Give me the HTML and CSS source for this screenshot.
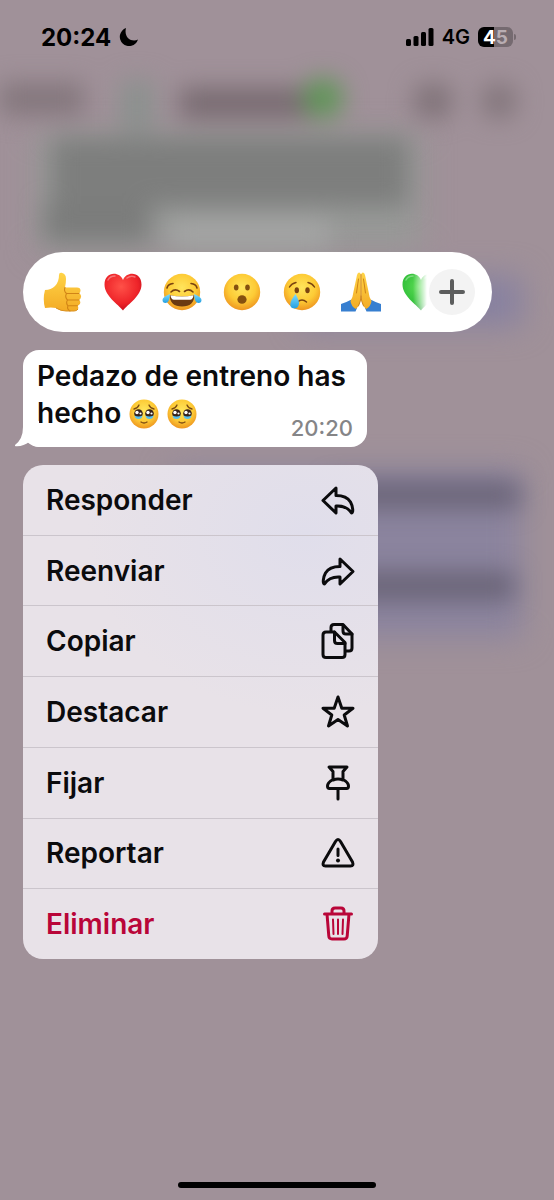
FILE: index.html
```
<!DOCTYPE html>
<html lang="es">
<head>
    <meta charset="UTF-8">
    <meta name="viewport" content="width=device-width, initial-scale=1.0">
    <title>Chat</title>
    <link rel="stylesheet" href="styles.css">
</head>
<body>
    <!-- Blurred chat behind the menu -->
    <svg class="backdrop" viewBox="0 0 554 1200" preserveAspectRatio="xMidYMin slice" aria-hidden="true">
        <defs>
            <filter id="soft" x="-80%" y="-150%" width="260%" height="400%" color-interpolation-filters="sRGB"><feGaussianBlur stdDeviation="12"/></filter>
            <filter id="softer" x="-30%" y="-60%" width="160%" height="220%" color-interpolation-filters="sRGB"><feGaussianBlur stdDeviation="15"/></filter>
        </defs>
        <g filter="url(#softer)">
            <rect x="36" y="134" width="386" height="116" fill="#979997"/>
            <rect x="300" y="276" width="222" height="50" fill="#8781a0"/>
            <rect x="170" y="470" width="352" height="168" fill="#8b849e"/>
        </g>
        <g filter="url(#soft)">
            <rect x="0" y="83" width="84" height="32" fill="#83767c"/>
            <rect x="120" y="80" width="34" height="52" fill="#8b918e"/>
            <rect x="180" y="88" width="130" height="30" fill="#776a70"/>
            <circle cx="323" cy="98" r="20" fill="#5e9656"/>
            <rect x="414" y="84" width="38" height="34" rx="12" fill="#7f7278"/>
            <rect x="482" y="84" width="34" height="34" rx="12" fill="#82757b"/>
            <rect x="52" y="138" width="356" height="68" fill="#7d7e7d"/>
            <rect x="44" y="204" width="106" height="38" fill="#7b7c7b"/>
            <rect x="170" y="218" width="160" height="30" fill="#a4a5a4"/>
            <rect x="330" y="482" width="190" height="26" fill="#696376"/>
            <rect x="330" y="572" width="184" height="28" fill="#696376"/>
        </g>
    </svg>

    <!-- Shared emoji drawings -->
    <svg class="defs" aria-hidden="true">
        <defs>
            <radialGradient id="face" cx="50%" cy="38%" r="62%">
                <stop offset="0" stop-color="#ffe55c"/>
                <stop offset="0.6" stop-color="#fdcb36"/>
                <stop offset="1" stop-color="#ee9620"/>
            </radialGradient>
            <radialGradient id="red" cx="45%" cy="35%" r="65%">
                <stop offset="0" stop-color="#ff5148"/>
                <stop offset="0.7" stop-color="#ee2429"/>
                <stop offset="1" stop-color="#c80f1d"/>
            </radialGradient>
            <radialGradient id="green" cx="45%" cy="35%" r="65%">
                <stop offset="0" stop-color="#5ddd56"/>
                <stop offset="0.7" stop-color="#34c13b"/>
                <stop offset="1" stop-color="#169a28"/>
            </radialGradient>
            <linearGradient id="skin" x1="0" y1="0" x2="0" y2="1">
                <stop offset="0" stop-color="#ffd447"/>
                <stop offset="1" stop-color="#f3ab25"/>
            </linearGradient>
            <linearGradient id="tear" x1="0" y1="0" x2="0" y2="1">
                <stop offset="0" stop-color="#7fdcff"/>
                <stop offset="1" stop-color="#249fe0"/>
            </linearGradient>
            <symbol id="pleading" viewBox="0 0 30 30">
                <circle cx="15" cy="15" r="14.5" fill="url(#face)"/>
                <path d="M5 10q4-1 5-4M25 10q-4-1-5-4" fill="none" stroke="#7b4a12" stroke-width="1.3" stroke-linecap="round"/>
                <circle cx="9.5" cy="14.5" r="4.3" fill="#35211a"/>
                <circle cx="20.5" cy="14.5" r="4.3" fill="#35211a"/>
                <path d="M5.500 16.500q4 2 8 0q-.5 3.500-4 3.500t-4-3.500zM16.500 16.500q4 2 8 0q-.5 3.500-4 3.500t-4-3.500z" fill="#57bff0"/>
                <circle cx="8" cy="13.500" r="1.700" fill="#fff"/>
                <circle cx="11.500" cy="14.500" r="1.100" fill="#fff"/>
                <circle cx="19" cy="13.500" r="1.700" fill="#fff"/>
                <circle cx="22.500" cy="14.500" r="1.100" fill="#fff"/>
                <path d="M12 23q3 2 6 0" fill="none" stroke="#7b4a12" stroke-width="1.300" stroke-linecap="round"/>
            </symbol>
            <symbol id="heart" viewBox="0 0 40 40">
                <path d="M20 38.500C15 32 1.500 24 1.500 12.500C1.500 5.500 6 1.800 10.800 1.800C15 1.800 18.300 4 20 8C21.700 4 25 1.800 29.200 1.800C34 1.800 38.500 5.500 38.500 12.500C38.500 24 25 32 20 38.500Z"/>
                <path d="M5 8q2-4 7-4M24 6q4-3 8-1" fill="none" stroke="#fff" stroke-opacity="0.35" stroke-width="1.500" stroke-linecap="round"/>
            </symbol>
        </defs>
    </svg>

    <header class="status-bar">
        <div class="status-left">
            <span class="clock">20:24</span>
            <svg class="moon" viewBox="0 0 20 20" aria-hidden="true"><path d="M7 1A9.300 9.300 0 1 0 19 12.500C13 15.500 4.500 11 7 1Z"/></svg>
        </div>
        <div class="status-right">
            <svg class="signal" viewBox="0 0 28 18" aria-hidden="true">
                <rect x="0" y="11" width="5" height="7" rx="1.500"/>
                <rect x="7.500" y="8" width="5" height="10" rx="1.500"/>
                <rect x="15" y="4" width="5" height="14" rx="1.500"/>
                <rect x="22.500" y="0" width="5" height="18" rx="1.500"/>
            </svg>
            <span class="network">4G</span>
            <div class="battery">
                <span class="battery-percent"><span>4</span><span class="battery-dim">5</span></span>
            </div>
        </div>
    </header>

    <main class="overlay">
        <div class="reactions">
            <div class="reaction-list">
                <button class="reaction" aria-label="Me gusta">
                    <svg viewBox="0 0 40 40">
                        <path d="M2 18Q8 18 12 14Q16 10 16 3Q16 .5 18.500 .8Q23 1.500 23 7Q23 11 22 15.500H34Q37.500 15.500 37.500 18.500Q37.500 20.500 36 21.500Q38.500 22.500 38 25Q37.800 27 36 28Q38 29.500 37 31.800Q36.200 33.400 34.500 33.800Q35.800 35.200 35 37Q34 39 31 39H23Q17 39 13 36Q8 35 2 36Q-.5 27 2 18Z" fill="url(#skin)"/>
                        <path d="M22 15.500Q20.500 19 23.500 21.500H36M23.500 21.500Q21.500 25 24.500 28H36M24.500 28Q22.500 31 25 33.800H34.500M25 33.800Q23.500 37 27 39" fill="none" stroke="#d18416" stroke-width="1.100" stroke-linecap="round"/>
                        <path d="M13 36Q18 39 23 39H31Q34 39 35 37" fill="none" stroke="#d99020" stroke-width="1"/>
                    </svg>
                </button>
                <button class="reaction" aria-label="Me encanta">
                    <svg viewBox="0 0 40 40" fill="url(#red)"><use href="#heart"/></svg>
                </button>
                <button class="reaction" aria-label="Me divierte">
                    <svg viewBox="0 0 40 40">
                        <circle cx="20" cy="20" r="18.200" fill="url(#face)"/>
                        <path d="M5 16q1-4 6-4.500M35 16q-1-4-6-4.500M9 20q4-4 8.500-.5M31 20q-4-4-8.500-.5" fill="none" stroke="#7a4310" stroke-width="1.600" stroke-linecap="round"/>
                        <path d="M7.500 23Q20 26 32.500 23Q32 34.500 20 34.500T7.500 23Z" fill="#6b3a12"/>
                        <path d="M8.500 23.200Q20 26 31.500 23.200Q31 27.500 28 27.800H12Q9 27.500 8.500 23.200Z" fill="#fff"/>
                        <path d="M8 22Q7.500 31 3.500 31Q.5 31 .5 28Q.5 25 8 22ZM32 22Q32.500 31 36.500 31Q39.500 31 39.500 28Q39.500 25 32 22Z" fill="url(#tear)"/>
                    </svg>
                </button>
                <button class="reaction" aria-label="Me asombra">
                    <svg viewBox="0 0 40 40">
                        <circle cx="20" cy="20" r="18.200" fill="url(#face)"/>
                        <ellipse cx="14.200" cy="15.500" rx="2.300" ry="3" fill="#85500f"/>
                        <ellipse cx="25.500" cy="15.500" rx="2.300" ry="3" fill="#85500f"/>
                        <ellipse cx="20" cy="27.500" rx="4.600" ry="4.300" fill="#85500f"/>
                    </svg>
                </button>
                <button class="reaction" aria-label="Me entristece">
                    <svg viewBox="0 0 40 40">
                        <circle cx="20" cy="20" r="18.200" fill="url(#face)"/>
                        <path d="M7.500 15q2-3.500 6.500-4.500M32.500 15q-2-3.500-6.500-4.500M15.500 30q4.500-4 9 0" fill="none" stroke="#7a4310" stroke-width="1.500" stroke-linecap="round"/>
                        <ellipse cx="14.800" cy="18.300" rx="2.200" ry="3" fill="#7a4310"/>
                        <ellipse cx="25.500" cy="18.300" rx="2.200" ry="3" fill="#7a4310"/>
                        <path d="M13.500 22Q17.500 29 17 32Q16 36.500 12 36.500Q8 36 8.300 32Q8.800 28 13.500 22Z" fill="url(#tear)"/>
                    </svg>
                </button>
                <button class="reaction" aria-label="Gracias">
                    <svg viewBox="0 0 40 40">
                        <path d="M0 32Q6 30 10.500 27.500L16 36L14.500 39.500H0ZM40 32Q34 30 29.500 27.500L24 36L25.500 39.500H40Z" fill="#377fd0"/>
                        <path d="M19.800 2.500Q19.500 .5 18 .5Q16.600 .5 16 3L12.500 19.500Q12 25 9.500 29Q10 34 14.800 37Q19.800 33 19.800 24ZM20.200 2.500Q20.500 .5 22 .5Q23.400 .5 24 3L27.500 19.500Q28 25 30.500 29Q30 34 25.200 37Q20.200 33 20.200 24Z" fill="url(#skin)"/>
                        <path d="M20 2.500V24Q20 29 17.500 34M20 24Q20 29 22.500 34M17.500 7L15.500 21M22.500 7L24.500 21" fill="none" stroke="#c87c13" stroke-width=".9" stroke-linecap="round"/>
                    </svg>
                </button>
                <button class="reaction" aria-label="Corazón verde">
                    <svg viewBox="0 0 40 40" fill="url(#green)"><use href="#heart"/></svg>
                </button>
            </div>
            <button class="reaction-more" aria-label="Más reacciones">
                <svg viewBox="0 0 26 26"><path d="M13 2V24M2 13H24"/></svg>
            </button>
        </div>

        <article class="message">
            <div class="message-text">Pedazo de entreno has</div>
            <div class="message-last-line">
                <div class="message-text message-emojis">
                    <span>hecho</span>
                    <svg class="emoji" role="img" aria-label="🥹"><use href="#pleading"/></svg>
                    <svg class="emoji" role="img" aria-label="🥹"><use href="#pleading"/></svg>
                </div>
                <time class="message-time">20:20</time>
            </div>
            <svg class="message-tail" viewBox="0 0 24 26" aria-hidden="true"><path d="M8 0V6Q8 18 0 24Q-.5 25.500 2 25.300Q9 25 14 21Q17 25 24 26V0Z"/></svg>
        </article>

        <nav class="menu">
            <button class="menu-item">
                <span>Responder</span>
                <svg class="menu-icon" viewBox="0 0 36 36"><path d="M16 6L3 18.500L16 31V24C23.500 23.500 28 25.500 31.500 31C33.500 31 33 24.500 30.500 20C27.500 15 22.500 13.500 16 13.500Z"/></svg>
            </button>
            <button class="menu-item">
                <span>Reenviar</span>
                <svg class="menu-icon" viewBox="0 0 36 36"><path d="M20 6L33 18.500L20 31V24C12.500 23.500 8 25.500 4.500 31C2.500 31 3 24.500 5.500 20C8.500 15 13.500 13.500 20 13.500Z"/></svg>
            </button>
            <button class="menu-item">
                <span>Copiar</span>
                <svg class="menu-icon" viewBox="0 0 36 36">
                    <path d="M11 8V4.500Q11 1.500 14 1.500H23L32 11V25Q32 28 29 28H25.500"/>
                    <path d="M23 2V8Q23 11 26 11H32"/>
                    <path d="M6 9H14.500L25 19.500V31.500Q25 34.500 22 34.500H6Q3 34.500 3 31.500V12Q3 9 6 9Z"/>
                    <path d="M14.500 9V17.500Q14.500 20.500 17.500 20.500H25"/>
                </svg>
            </button>
            <button class="menu-item">
                <span>Destacar</span>
                <svg class="menu-icon" viewBox="0 0 36 36"><path d="M18 3L21.800 14.200H33L24.200 21L27.500 32L18 25.500L8.500 32L11.800 21L3 14.200H14.200Z"/></svg>
            </button>
            <button class="menu-item">
                <span>Fijar</span>
                <svg class="menu-icon" viewBox="0 0 36 36">
                    <path d="M9 2H27L23 6.500V14.500Q28.500 17.500 28.500 21Q28.500 23.500 26.500 23.500H9.500Q7.500 23.500 7.500 21Q7.500 17.500 13 14.500V6.500ZM13 15Q18 13 23 15M18 23.500V34"/>
                </svg>
            </button>
            <button class="menu-item">
                <span>Reportar</span>
                <svg class="menu-icon" viewBox="0 0 36 36">
                    <path d="M15.500 6.500Q18 2.500 20.500 6.500L32.500 27Q34 31 30.500 31H5.500Q2 31 3.500 27ZM18 14V20.500"/>
                    <circle class="dot" cx="18" cy="25.500" r="2"/>
                </svg>
            </button>
            <button class="menu-item menu-item-danger">
                <span>Eliminar</span>
                <svg class="menu-icon" viewBox="0 0 36 36">
                    <path d="M4.500 8H31.500M12 8V5Q12 2 15 2H21Q24 2 24 5V8M7 8L8.800 30Q9 33 12 33H24Q27 33 27.200 30L29 8"/>
                    <path class="thin" d="M13 13.500L13.500 28M18 13.500V28M23 13.500L22.500 28"/>
                </svg>
            </button>
        </nav>
    </main>

    <div class="home-indicator"></div>
</body>
</html>
```

FILE: styles.css
```
* {
    box-sizing: border-box;
}

body {
    display: flex;
    flex-direction: column;
    position: relative;
    min-height: 100vh;
    margin: 0;
    background-color: #a09199;
    color: #0b0b0d;
    font-family: Inter, 'Liberation Sans', sans-serif;
}

button {
    margin: 0;
    padding: 0;
    border: 0;
    background: none;
    color: inherit;
    font: inherit;
    cursor: pointer;
}

svg {
    display: block;
}

.backdrop {
    position: absolute;
    top: 0;
    left: 0;
    width: 100%;
    height: 100%;
    z-index: -1;
}

.defs {
    position: absolute;
    width: 0;
    height: 0;
}

/* Status bar */
.status-bar {
    display: flex;
    justify-content: space-between;
    align-items: center;
    height: 74px;
    padding: 0 41px;
    color: #000;
}

.status-left,
.status-right {
    display: flex;
    align-items: center;
    gap: 8px;
}

.clock {
    font-size: 24px;
    font-weight: 700;
}

.moon {
    width: 20px;
    height: 20px;
}

.signal {
    width: 28px;
    height: 18px;
}

.network {
    font-size: 20px;
    font-weight: 600;
}

.battery {
    display: flex;
    justify-content: center;
    align-items: center;
    position: relative;
    width: 35px;
    height: 20px;
    border-radius: 6px;
    background: linear-gradient(to right, #000 45%, #756a70 45%);
    color: #fff;
    font-size: 19px;
    font-weight: 700;
}

.battery::after {
    content: '';
    position: absolute;
    right: -3px;
    width: 2px;
    height: 6px;
    border-radius: 0 2px 2px 0;
    background-color: #756a70;
}

.battery-dim {
    color: #b8adb2;
}

/* Reactions, message and menu */
.overlay {
    display: flex;
    flex-direction: column;
    align-items: flex-start;
    gap: 18px;
    padding: 178px 62px 32px 23px;
}

.reactions {
    display: flex;
    align-items: center;
    width: 100%;
    height: 80px;
    padding: 0 17px 0 20px;
    border-radius: 40px;
    background-color: #fff;
}

.reaction-list {
    display: flex;
    flex: 1;
    justify-content: space-between;
    mask-image: linear-gradient(to right, #000 calc(100% - 28px), transparent calc(100% - 14px));
}

.reaction svg {
    width: 40px;
    height: 40px;
}

.reaction-more {
    display: flex;
    justify-content: center;
    align-items: center;
    width: 46px;
    height: 46px;
    margin-left: -12px;
    border-radius: 50%;
    background-color: #f3f3f3;
}

.reaction-more svg {
    width: 26px;
    height: 26px;
    fill: none;
    stroke: #5c5d5d;
    stroke-width: 4;
    stroke-linecap: round;
}

.message {
    position: relative;
    width: 344px;
    max-width: 100%;
    padding: 8px 14px 5px;
    border-radius: 16px;
    background-color: #fff;
}

.message-text {
    font-size: 28px;
    font-weight: 600;
    line-height: 37px;
}

.message-last-line {
    display: flex;
    justify-content: space-between;
    align-items: flex-start;
}

.message-emojis {
    display: flex;
    align-items: center;
    gap: 8px;
}

.emoji {
    width: 30px;
    height: 30px;
}

.message-time {
    padding-top: 19px;
    color: #858587;
    font-size: 22px;
    font-weight: 500;
    line-height: 28px;
}

.message-tail {
    position: absolute;
    left: -8px;
    bottom: 0;
    width: 24px;
    height: 26px;
    fill: #fff;
}

.menu {
    display: flex;
    flex-direction: column;
    width: 355px;
    max-width: 100%;
    min-height: 494px;
    border-radius: 20px;
    background: radial-gradient(ellipse 220px 180px at 80% 14%, #e0deeb, #e8e2e8);
    overflow: hidden;
}

.menu-item {
    display: flex;
    flex: 1;
    justify-content: space-between;
    align-items: center;
    padding: 0 22px 0 23px;
    font-size: 28px;
    font-weight: 600;
    text-align: left;
}

.menu-item + .menu-item {
    border-top: 1px solid #cbc5cc;
}

.menu-icon {
    width: 36px;
    height: 36px;
    fill: none;
    stroke: currentColor;
    stroke-width: 3;
    stroke-linecap: round;
    stroke-linejoin: round;
}

.menu-icon .dot {
    fill: currentColor;
    stroke: none;
}

.menu-icon .thin {
    stroke-width: 2;
}

.menu-item-danger {
    color: #b90538;
}

.home-indicator {
    align-self: center;
    width: 198px;
    height: 6px;
    margin-top: auto;
    margin-bottom: 12px;
    border-radius: 3px;
    background-color: #000;
}
```
